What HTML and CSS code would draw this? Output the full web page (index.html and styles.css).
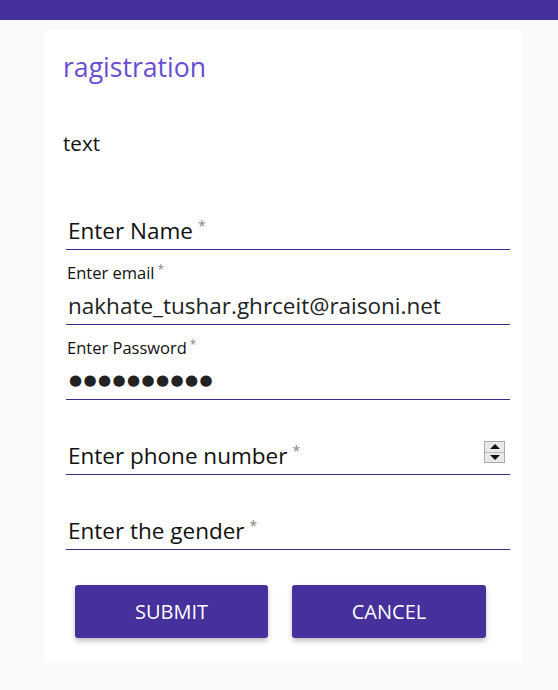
FILE: index.html
```html
<!DOCTYPE html>
<html>
<head>
<meta charset="utf-8">
<link rel="stylesheet" href="styles.css">
</head>
<body>
<div class="topbar"></div>
<div class="card">
  <h1 class="title">ragistration</h1>
  <p class="text">text</p>
  <form class="form">
    <div class="field">
      <div class="row"><span class="big">Enter Name<span class="req">*</span></span></div>
    </div>
    <div class="field filled">
      <div class="small">Enter email<span class="req">*</span></div>
      <div class="row"><span class="value">nakhate_tushar.ghrceit@raisoni.net</span></div>
    </div>
    <div class="field filled">
      <div class="small">Enter Password<span class="req">*</span></div>
      <div class="row"><span class="dots">●●●●●●●●●●</span></div>
    </div>
    <div class="field">
      <div class="row"><span class="big">Enter phone number<span class="req">*</span></span>
        <span class="spin"><span class="up"></span><span class="down"></span></span>
      </div>
    </div>
    <div class="field">
      <div class="row"><span class="big">Enter the gender<span class="req">*</span></span></div>
    </div>
    <div class="buttons">
      <button type="button" class="btn">SUBMIT</button>
      <button type="button" class="btn">CANCEL</button>
    </div>
  </form>
</div>
</body>
</html>
```
FILE: styles.css
```css
html, body { margin: 0; padding: 0; }
body {
  background: #fafafa;
  font-family: "Open Sans", "Noto Sans", sans-serif;
  color: #111;
  width: 558px;
  height: 690px;
  overflow: hidden;
}
.topbar { height: 20px; background: #45309c; }
.card {
  background: #fff;
  margin: 10px 36px 0 44px;
  height: 633px;
  padding: 0 12px 0 19px;
  box-sizing: border-box;
}
.title {
  margin: 0;
  padding-top: 20px;
  font-size: 26.6px;
  font-weight: 400;
  color: #6a4bd3;
  line-height: 34px;
}
.text {
  margin: 0;
  padding-top: 46px;
  font-size: 20.6px;
  line-height: 26px;
}
.form {
  display: flex;
  flex-direction: column;
  margin-top: 54px;
  padding-left: 3px;
}
.field {
  height: 75px;
  box-sizing: border-box;
  display: flex;
  flex-direction: column;
  justify-content: flex-end;
}
.field:first-child { height: 40px; }
.row {
  display: flex;
  align-items: center;
  justify-content: space-between;
  border-bottom: 1px solid #3d2b94;
  height: 38px;
  padding-left: 2px;
  padding-right: 5px;
}
.big { font-size: 22.5px; color: #111; }
.req { color: #888; font-size: 14px; vertical-align: 8px; margin-left: 5px; }
.small { font-size: 16.5px; padding-left: 1px; line-height: 18px; margin-bottom: 4px; }
.small .req { font-size: 12px; vertical-align: 5px; margin-left: 3px; }
.value { font-size: 22.5px; color: #222; }
.dots { font-family: "DejaVu Sans", sans-serif; font-size: 15px; letter-spacing: 1.4px; color: #222; padding-left: 1px; }
.spin {
  width: 21px; height: 22px;
  border: 1px solid #aaa;
  background: #e8e8e8;
  display: flex; flex-direction: column;
  box-sizing: border-box;
  margin-bottom: 6px;
}
.up, .down { flex: 1; display: flex; align-items: center; justify-content: center; }
.up { border-bottom: 1px solid #bbb; }
.up::before { content: ""; border-left: 5px solid transparent; border-right: 5px solid transparent; border-bottom: 5px solid #111; }
.down::before { content: ""; border-left: 5px solid transparent; border-right: 5px solid transparent; border-top: 5px solid #111; }
.buttons {
  display: flex;
  gap: 24px;
  margin-top: 35px;
  padding-left: 9px;
}
.btn {
  width: 193px;
  height: 53px;
  border: none;
  border-radius: 3px;
  background: #45309c;
  color: #fff;
  font-family: "Open Sans", sans-serif;
  font-size: 20px;
  box-shadow: 0 3px 5px rgba(0,0,0,0.25);
}
.btn + .btn { width: 194px; }
```
